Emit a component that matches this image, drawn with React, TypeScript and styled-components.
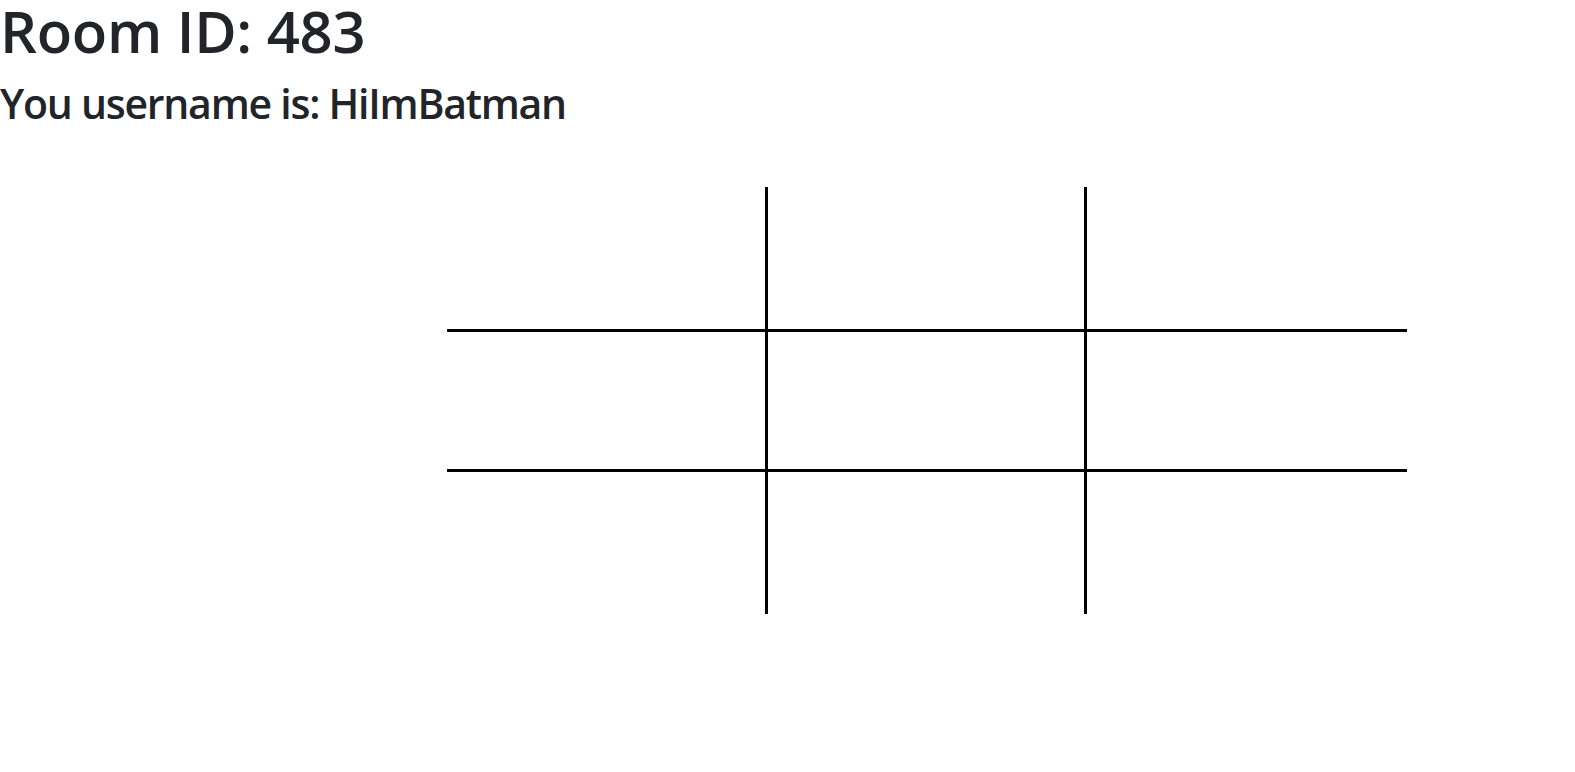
import styled, { createGlobalStyle } from 'styled-components';

const GlobalStyle = createGlobalStyle`
  body {
    margin: 0;
    background: #fff;
    font-family: 'Open Sans', 'Noto Sans', sans-serif;
    color: #212529;
  }
`;

const cells = Array.from({ length: 9 }, (_, i) => i);

const App = () => {
  return (
    <Page>
      <GlobalStyle />
      <RoomTitle>Room ID: 483</RoomTitle>
      <UserLine>You username is: HiImBatman</UserLine>
      <Board>
        {cells.map((i) => (
          <Cell key={i} $right={i % 3 !== 2} $bottom={i < 6} />
        ))}
      </Board>
    </Page>
  );
};

export default App;

const Page = styled.div`
  display: flex;
  flex-direction: column;
  align-items: flex-start;
`;

const RoomTitle = styled.h1`
  margin: 0;
  font-size: 58px;
  font-weight: 600;
  line-height: 61px;
  letter-spacing: -0.3px;
`;

const UserLine = styled.h3`
  margin: 17px 0 0;
  font-size: 41px;
  font-weight: 600;
  line-height: 50px;
  letter-spacing: -1.25px;
`;

const Board = styled.div`
  display: grid;
  grid-template-columns: 321px 319px 320px;
  grid-template-rows: 145px 140px 142px;
  margin: 59px 0 0 447px;
`;

const Cell = styled.div<{ $right: boolean; $bottom: boolean }>`
  box-sizing: border-box;
  border-right: ${(p) => (p.$right ? '3px solid #000' : 'none')};
  border-bottom: ${(p) => (p.$bottom ? '3px solid #000' : 'none')};
  cursor: pointer;
`;
